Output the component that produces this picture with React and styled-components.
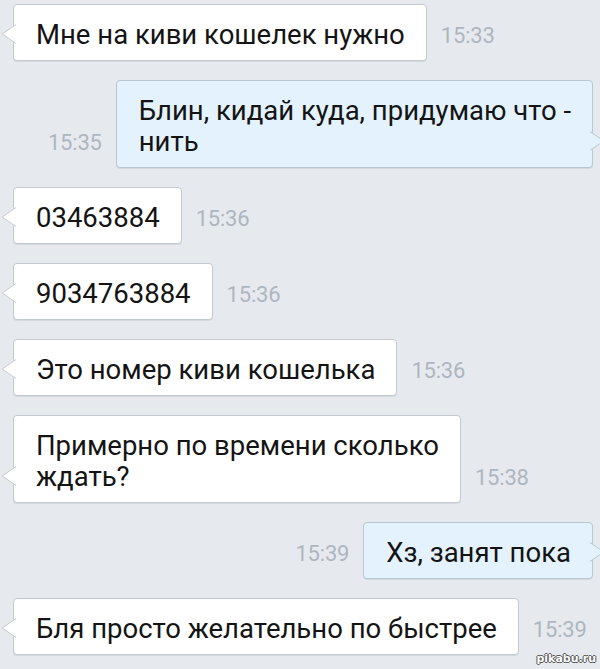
import React from "react";
import styled, { createGlobalStyle } from "styled-components";

const Global = createGlobalStyle`
  html, body {
    margin: 0;
    padding: 0;
    background: #e6eaee;
  }
  body {
    font-family: Roboto, "Noto Sans", sans-serif;
  }
`;

const messages = [
  { id: 1, out: false, lines: ["Мне на киви кошелек нужно"], time: "15:33" },
  { id: 2, out: true, lines: ["Блин, кидай куда, придумаю что -", "нить"], time: "15:35" },
  { id: 3, out: false, lines: ["03463884"], time: "15:36" },
  { id: 4, out: false, lines: ["9034763884"], time: "15:36" },
  { id: 5, out: false, lines: ["Это номер киви кошелька"], time: "15:36" },
  { id: 6, out: false, lines: ["Примерно по времени сколько", "ждать?"], time: "15:38" },
  { id: 7, out: true, lines: ["Хз, занят пока"], time: "15:39" },
  { id: 8, out: false, lines: ["Бля просто желательно по быстрее"], time: "15:39" },
];

const Chat = () => {
  return (
    <Screen>
      {messages.map((m) => (
        <Row key={m.id} $out={m.out}>
          {m.out && <Time>{m.time}</Time>}
          <Bubble $out={m.out}>
            <Tail $out={m.out} width="15" height="20" viewBox="0 0 15 20">
              <path d="M15 0 L1 10 L15 20 Z" fill={m.out ? "#e3f2fc" : "#ffffff"} />
              <path
                d="M15 0.5 L1.2 10 L15 19.5"
                fill="none"
                stroke={m.out ? "#b7c8d4" : "#c3cad1"}
                strokeWidth="1"
              />
            </Tail>
            {m.lines.map((line, i) => (
              <Line key={i}>{line}</Line>
            ))}
          </Bubble>
          {!m.out && <Time>{m.time}</Time>}
        </Row>
      ))}
      <Watermark>pikabu.ru</Watermark>
    </Screen>
  );
};

const Screen = styled.div`
  position: relative;
  height: 669px;
  box-sizing: border-box;
  padding: 4px 7px 0 13px;
  display: flex;
  flex-direction: column;
  gap: 19px;
  overflow: hidden;
`;

const Row = styled.div`
  display: flex;
  align-items: flex-end;
  justify-content: ${(p) => (p.$out ? "flex-end" : "flex-start")};
  gap: 14px;
`;

const Bubble = styled.div`
  position: relative;
  box-sizing: border-box;
  padding: 14px 21px 10px 22px;
  background: ${(p) => (p.$out ? "#e3f2fc" : "#ffffff")};
  border: 1px solid ${(p) => (p.$out ? "#b7c8d4" : "#c3cad1")};
  border-radius: 4px;
  box-shadow: 0 1px 0 rgba(0, 0, 0, 0.07);
  color: #141414;
  font-size: 27.5px;
  line-height: 31px;
  white-space: nowrap;
`;

const Line = styled.div``;

const Tail = styled.svg`
  position: absolute;
  bottom: 16px;
  ${(p) => (p.$out ? "right: -13px; transform: scaleX(-1);" : "left: -13px;")}
  display: block;
`;

const Time = styled.span`
  font-size: 22px;
  line-height: 26px;
  padding-bottom: 12px;
  color: #aeb6bf;
  letter-spacing: -0.2px;
`;

const Watermark = styled.span`
  position: absolute;
  right: 4px;
  bottom: 4px;
  font-family: "DejaVu Sans", sans-serif;
  font-size: 11px;
  font-weight: bold;
  color: #ffffff;
  text-shadow: 1px 0 0 #555, -1px 0 0 #555, 0 1px 0 #555, 0 -1px 0 #555;
`;

export default function App() {
  return (
    <>
      <Global />
      <Chat />
    </>
  );
}
